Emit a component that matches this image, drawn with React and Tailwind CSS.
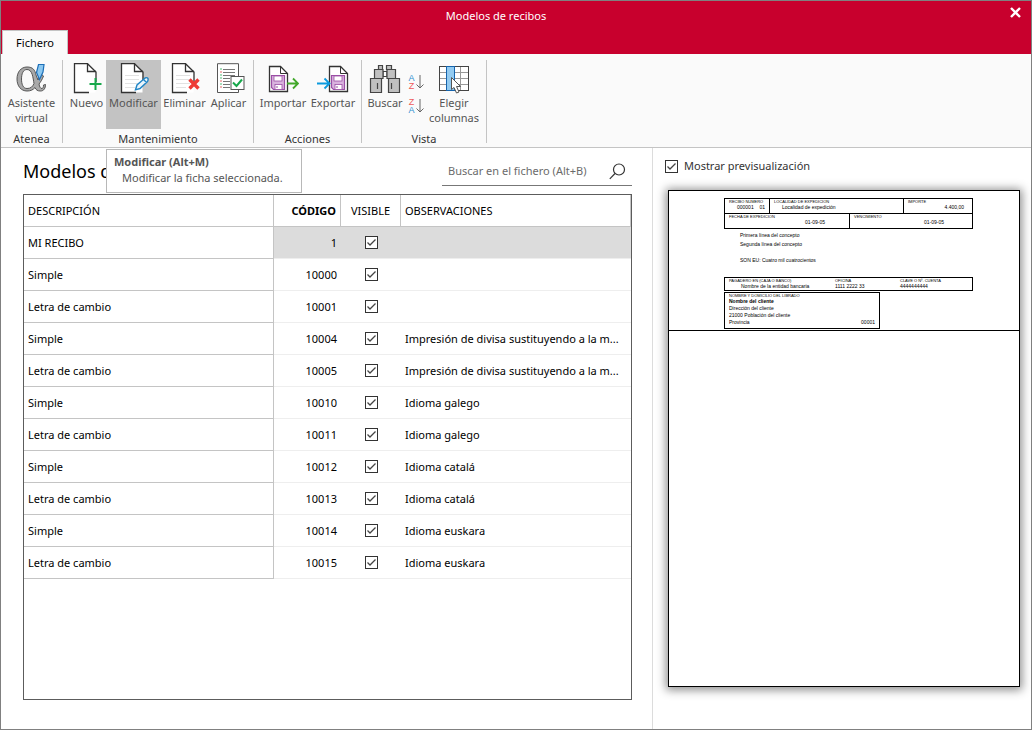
import { useState } from "react";
import clsx from "clsx";

const models = [
  { name: "MI RECIBO", code: 1, notes: "" },
  { name: "Simple", code: 10000, notes: "" },
  { name: "Letra de cambio", code: 10001, notes: "" },
  { name: "Simple", code: 10004, notes: "Impresión de divisa sustituyendo a la m..." },
  { name: "Letra de cambio", code: 10005, notes: "Impresión de divisa sustituyendo a la m..." },
  { name: "Simple", code: 10010, notes: "Idioma galego" },
  { name: "Letra de cambio", code: 10011, notes: "Idioma galego" },
  { name: "Simple", code: 10012, notes: "Idioma catalá" },
  { name: "Letra de cambio", code: 10013, notes: "Idioma catalá" },
  { name: "Simple", code: 10014, notes: "Idioma euskara" },
  { name: "Letra de cambio", code: 10015, notes: "Idioma euskara" },
];

function AssistantIcon() {
  return (
    <svg width="32" height="32" viewBox="0 0 32 32" fill="none">
      <path
        d="M11 4C17 4 19 7 20 12L22 17L25 11L27.500 13C26 17 24.500 19 23 21C23.500 24 24.500 25.500 26 25.500C27 25.500 27.500 24 27.500 22L29.500 21.500C29.500 25 28 28 24.500 28C21.500 28 20 27 19 24.500C17 27 14.500 28 11 28C5 28 1 23 1 16C1 9 5 4 11 4ZM11 6.500C7 6.500 5.500 11 5.500 16C5.500 21 7 25.500 11 25.500C14.500 25.500 16.500 24 18 20.500C17 15 16.500 6.500 11 6.500Z"
        fill="#a9a9a9"
        stroke="#555"
        fillRule="evenodd"
      />
      <path d="M22.500 1.500H28L27 9L23.500 16.500L20.500 9.500Z" fill="#8cc8f0" stroke="#1d6fb8" strokeWidth="1.200" />
    </svg>
  );
}

function Page() {
  return (
    <>
      <path d="M3.500 .7H16.500L24.500 8.500V29.500H3.500Z" fill="#fff" />
      <path d="M25 19V9L16.500 .7H3.500V29.500H18" stroke="#333" strokeWidth="1.300" />
      <path d="M16.500 .7V8.500H25" stroke="#333" strokeWidth="1.300" />
    </>
  );
}

function PageLines() {
  return <path d="M7 12.500H21M7 16.500H21M7 20.500H21M7 24.500H17" stroke="#e2e2e2" />;
}

function NewIcon() {
  return (
    <svg width="32" height="32" viewBox="0 0 32 32" fill="none">
      <Page />
      <path d="M24.500 15V27M18.500 21H30.500" stroke="#17a84b" strokeWidth="2" />
    </svg>
  );
}

function EditIcon() {
  return (
    <svg width="32" height="32" viewBox="0 0 32 32" fill="none">
      <Page />
      <PageLines />
      <path d="M17.500 26.800L19 22L27 15Q29 14 30 15.500Q30.500 17 29.500 18.500L22 25.500L17.500 26.800ZM25.500 16.500L28.500 19.500" fill="#eaf5fc" stroke="#2185c5" strokeWidth="1.400" />
    </svg>
  );
}

function DeleteIcon() {
  return (
    <svg width="32" height="32" viewBox="0 0 32 32" fill="none">
      <Page />
      <PageLines />
      <path d="M20.500 16.500L29.500 25.500M29.500 16.500L20.500 25.500" stroke="#ee3b36" strokeWidth="3.400" />
    </svg>
  );
}

function ApplyIcon() {
  return (
    <svg width="32" height="32" viewBox="0 0 32 32" fill="none">
      <path d="M4.500 .7H25.500V29.500H4.500Z" fill="#fff" stroke="#555" />
      <path d="M10 6.500H22M10 9.500H22M10 12.500H22M10 15.500H17M10 18.500H17M10 21.500H17M10 24.500H17" stroke="#777" />
      <path d="M7.500 6H8.500M7.500 12H8.500M7.500 15H8.500M7.500 21H8.500" stroke="#17a84b" strokeWidth="1.500" />
      <path d="M7.500 9H8.500M7.500 18H8.500M7.500 24H8.500" stroke="#d33" strokeWidth="1.500" />
      <rect x="18" y="13.500" width="13" height="13" fill="#fff" stroke="#555" />
      <path d="M20 19.500L23.500 23L29 16.500" stroke="#17a84b" strokeWidth="2" />
    </svg>
  );
}

function Floppy({ x }) {
  return (
    <g transform={`translate(${x} 12)`}>
      <path d="M.5 .5H13.500V14.500H2.500L.5 12.500Z" fill="#d9b3de" stroke="#9b4fa5" strokeWidth="1.200" />
      <rect x="3" y="1" width="8" height="5" fill="#fff" stroke="#9b4fa5" strokeWidth=".8" />
      <rect x="4" y="9.500" width="7" height="5" fill="#fff" stroke="#9b4fa5" strokeWidth=".8" />
      <path d="M6 11V13" stroke="#9b4fa5" />
    </g>
  );
}

function ImportIcon() {
  return (
    <svg width="32" height="32" viewBox="0 0 32 32" fill="none">
      <path d="M2.500 3.500H13.500L20.500 10.500V28.500H2.500Z" fill="#fff" stroke="#333" strokeWidth="1.300" />
      <path d="M13.500 3.500V10.500H20.500" stroke="#333" />
      <Floppy x={4} />
      <path d="M20 20.500H31M26 15.500L31 20.500L26 25.500" stroke="#42a82b" strokeWidth="1.800" />
    </svg>
  );
}

function ExportIcon() {
  return (
    <svg width="32" height="32" viewBox="0 0 32 32" fill="none">
      <path d="M12.500 3.500H23.500L30.500 10.500V28.500H12.500Z" fill="#fff" stroke="#333" strokeWidth="1.300" />
      <path d="M23.500 3.500V10.500H30.500" stroke="#333" />
      <Floppy x={14} />
      <path d="M0 20.500H12M7.500 15.500L12.500 20.500L7.500 25.500" stroke="#0b9ade" strokeWidth="1.800" />
    </svg>
  );
}

function BinocularsIcon() {
  return (
    <svg width="32" height="32" viewBox="0 -1 32 32" fill="#c0c0c0" stroke="#444" strokeWidth="1.200">
      <path d="M9.500 1.500H13.500V5.500H9.500ZM17.500 1.500H22.500V5.500H17.500Z" />
      <path d="M14 7.500H18V12.500H14Z" fill="#fff" />
      <path d="M5.500 5.500H14V14.500H5.500ZM18 5.500H26.500V14.500H18Z" />
      <path d="M1.500 14.500H12.500V28.500H1.500ZM19.500 14.500H30.500V28.500H19.500ZM8.500 19V25M22.500 19V25" />
    </svg>
  );
}

function ColumnsIcon() {
  return (
    <svg width="32" height="32" viewBox="0 -1 32 32" fill="none">
      <rect x="1.500" y="2.500" width="29" height="24" fill="#fff" stroke="#444" />
      <path d="M2 8.500H30M2 14.500H30M2 20.500H30M22.500 3V26" stroke="#999" />
      <rect x="8.500" y="2.500" width="8" height="24" fill="#93cbf1" stroke="#1664ad" />
      <path d="M13.500 13.500V25.500L16 23.500L18.500 29L21 28L18.500 22.500H22.500Z" fill="#fff" stroke="#555" />
    </svg>
  );
}

function SortIcon({ first, second, firstClass, secondClass }) {
  return (
    <span className="flex items-center gap-px font-['Liberation_Sans'] text-[9px] leading-[8px]">
      <span className="flex w-[7px] flex-col items-center">
        <span className={firstClass}>{first}</span>
        <span className={secondClass}>{second}</span>
      </span>
      <svg width="8" height="14" viewBox="0 0 8 14" fill="none" stroke="#666">
        <path d="M4 0V13M.5 9.500L4 13L7.500 9.500" />
      </svg>
    </span>
  );
}

function RibbonButton({ icon, children, active, className }) {
  return (
    <button
      type="button"
      className={clsx(
        "flex h-[69px] flex-col items-center pt-[3px] leading-[15px] text-[#555]",
        active && "bg-[#c3c3c3]",
        className
      )}
    >
      {icon}
      <span>{children}</span>
    </button>
  );
}

function RibbonGroup({ title, className, children }) {
  return (
    <section className={clsx("flex flex-col justify-between border-r border-[#c4c4c4]", className)}>
      <div className="flex">{children}</div>
      <h2 className="text-center leading-2 text-[#333]">{title}</h2>
    </section>
  );
}

function CheckBox(props) {
  return (
    <span className="inline-grid align-middle">
      <input
        type="checkbox"
        className="peer col-start-1 row-start-1 size-[13px] appearance-none border border-[#333] bg-white"
        {...props}
      />
      <svg
        className="pointer-events-none invisible col-start-1 row-start-1 peer-checked:visible"
        width="13"
        height="13"
        viewBox="0 0 13 13"
        fill="none"
      >
        <path d="M2.500 6.500L5 9L10.500 3.500" stroke="#444" strokeWidth="1.300" />
      </svg>
    </span>
  );
}

function Field({ label, className, children }) {
  return (
    <div className={clsx("px-1 leading-[7px]", className)}>
      <div className="text-[4px] leading-[5px] whitespace-nowrap">{label}</div>
      {children}
    </div>
  );
}

function Receipt() {
  return (
    <div className="border-b border-black px-[55px] pt-[7px] pb-px font-['Liberation_Sans',sans-serif] text-[5px] text-black">
      <div className="w-[249px] border border-black">
        <div className="flex h-[15px] border-b border-black">
          <Field label="RECIBO NUMERO" className="w-[45px] border-r border-black">
            <div className="flex justify-between pl-2">
              <span>000001</span>
              <span>01</span>
            </div>
          </Field>
          <Field label="LOCALIDAD DE EXPEDICION" className="flex-1 border-r border-black">
            <div className="pl-2">Localidad de expedición</div>
          </Field>
          <Field label="IMPORTE" className="w-[68px]">
            <div className="pr-1 text-right">4.400,00</div>
          </Field>
        </div>
        <div className="flex h-[14px]">
          <Field label="FECHA DE EXPEDICION" className="w-[125px] border-r border-black">
            <div className="pr-5 text-right">01-09-05</div>
          </Field>
          <Field label="VENCIMIENTO" className="flex-1">
            <div className="pr-6 text-right">01-09-05</div>
          </Field>
        </div>
      </div>
      <div className="pt-[2px] pl-4 leading-[9px]">
        <p>Primera línea del concepto</p>
        <p>Segunda línea del concepto</p>
        <p className="pt-[7px]">SON EU: Cuatro mil cuatrocientos</p>
      </div>
      <div className="mt-3 flex h-[14px] w-[249px] border border-black">
        <Field label="PAGADERO EN (CAJA O BANCO)" className="w-[106px]">
          <div className="pl-3">Nombre de la entidad bancaria</div>
        </Field>
        <Field label="OFICINA" className="w-[65px]">
          1111 2222 33
        </Field>
        <Field label="CLAVE O Nº. CUENTA">4444444444</Field>
      </div>
      <div className="mt-px h-[37px] w-[156px] border border-black px-1">
        <div className="text-[4px] leading-[5px]">NOMBRE Y DOMICILIO DEL LIBRADO</div>
        <div className="leading-[7px]">
          <p className="font-bold">Nombre del cliente</p>
          <p>Dirección del cliente</p>
          <p>21000 Población del cliente</p>
          <p className="flex justify-between">
            <span>Provincia</span>
            <span>00001</span>
          </p>
        </div>
      </div>
    </div>
  );
}

export default function App() {
  const [selected, setSelected] = useState(1);
  const [preview, setPreview] = useState(true);

  return (
    <div className="flex min-h-screen flex-col border border-[#808080] bg-white font-['Noto_Sans',sans-serif] text-[11px] text-black">
      <header className="relative bg-[#c8002d]">
        <h1 className="py-[7px] pr-12 pl-2 text-center leading-[15px] text-white">Modelos de recibos</h1>
        <button type="button" aria-label="Cerrar" className="absolute top-1.5 right-2.5 text-white">
          <svg width="11" height="11" viewBox="0 0 11 11" stroke="currentColor" strokeWidth="2.400">
            <path d="M1 1L10 10M10 1L1 10" />
          </svg>
        </button>
        <nav className="flex pl-px">
          <button type="button" className="h-6 w-[66px] border border-b-0 border-[#c4c4c4] bg-[#fafafa] pt-px">
            Fichero
          </button>
        </nav>
      </header>

      <div className="flex h-[94px] border-b border-[#c4c4c4] bg-[#fafafa] pt-1.5 pb-1">
        <RibbonGroup title="Atenea" className="w-[62px]">
          <RibbonButton icon={<AssistantIcon />} className="w-full">
            Asistente virtual
          </RibbonButton>
        </RibbonGroup>
        <RibbonGroup title="Mantenimiento" className="w-[191px]">
          <RibbonButton icon={<NewIcon />} className="ml-1 w-[39px]">
            Nuevo
          </RibbonButton>
          <div className="relative">
            <RibbonButton icon={<EditIcon />} active className="w-[55px]">
              Modificar
            </RibbonButton>
            <div
              role="tooltip"
              className="absolute top-[89px] left-0 z-10 h-11 w-[196px] border border-[#b8b8b8] bg-white px-[7px] pt-1 leading-4 text-[#555]"
            >
              <strong>Modificar (Alt+M)</strong>
              <p className="pl-2 whitespace-nowrap">Modificar la ficha seleccionada.</p>
            </div>
          </div>
          <RibbonButton icon={<DeleteIcon />} className="w-[47px]">
            Eliminar
          </RibbonButton>
          <RibbonButton icon={<ApplyIcon />} className="w-[41px]">
            Aplicar
          </RibbonButton>
        </RibbonGroup>
        <RibbonGroup title="Acciones" className="w-[108px]">
          <RibbonButton icon={<ImportIcon />} className="ml-1 w-[50px]">
            Importar
          </RibbonButton>
          <RibbonButton icon={<ExportIcon />} className="w-[50px]">
            Exportar
          </RibbonButton>
        </RibbonGroup>
        <RibbonGroup title="Vista" className="w-[125px]">
          <RibbonButton icon={<BinocularsIcon />} className="w-[46px]">
            Buscar
          </RibbonButton>
          <div className="flex flex-col gap-2 pt-[14px]">
            <button type="button" aria-label="Orden ascendente">
              <SortIcon first="A" second="Z" firstClass="text-[#2f8fd0]" secondClass="text-[#ee5a5a]" />
            </button>
            <button type="button" aria-label="Orden descendente">
              <SortIcon first="Z" second="A" firstClass="text-[#ee5a5a]" secondClass="text-[#2f8fd0]" />
            </button>
          </div>
          <RibbonButton icon={<ColumnsIcon />} className="w-[60px]">
            Elegir columnas
          </RibbonButton>
        </RibbonGroup>
      </div>

      <main className="flex flex-1">
        <section className="flex flex-1 flex-col pr-5 pb-[29px] pl-[22px]">
          <div className="flex h-[46px] items-start justify-between pt-2">
            <h2 className="text-lg leading-[30px]">Modelos de recibos</h2>
            <label className="flex h-[30px] w-[190px] items-center border-b border-[#777] px-1.5 pt-0.5">
              <input
                type="search"
                aria-label="Buscar en el fichero"
                placeholder="Buscar en el fichero (Alt+B)"
                className="min-w-0 flex-1 outline-none placeholder:text-[#6b6b6b]"
              />
              <svg width="17" height="17" viewBox="0 0 17 17" fill="none" stroke="#333" strokeWidth="1.200">
                <circle cx="10" cy="6.500" r="5.500" />
                <path d="M6 10.500L.8 15.800" />
              </svg>
            </label>
          </div>
          <div className="flex-1 border border-[#5c5c5c]">
            <table className="w-full table-fixed border-separate border-spacing-0 text-left">
              <thead>
                <tr className="h-8 *:border-r *:border-b *:border-[#c4c4c4] *:px-1 *:pt-0.5 *:font-normal">
                  <th className="w-[250px]">DESCRIPCIÓN</th>
                  <th className="w-[67px] text-right">
                    <strong>CÓDIGO</strong>
                  </th>
                  <th className="w-[60px] text-center">VISIBLE</th>
                  <th>OBSERVACIONES</th>
                </tr>
              </thead>
              <tbody>
                {models.map((m) => (
                  <tr
                    key={m.code}
                    onClick={() => setSelected(m.code)}
                    className={clsx("h-8 *:border-b *:px-1", m.code === selected && "bg-[#dcdcdc]")}
                  >
                    <td className="border-r border-[#c4c4c4] bg-white pt-0.5">{m.name}</td>
                    <td className="border-[#eee] pt-0.5 text-right">{m.code}</td>
                    <td className="border-[#eee] text-center leading-3">
                      <CheckBox defaultChecked aria-label={`Visible ${m.code}`} />
                    </td>
                    <td className="border-[#eee] pt-0.5 whitespace-nowrap">{m.notes}</td>
                  </tr>
                ))}
              </tbody>
            </table>
          </div>
        </section>

        <aside className="flex w-[379px] flex-col border-l border-[#dcdcdc] pr-[11px] pb-[42px] pl-[15px]">
          <label className="-ml-[3px] flex h-[42px] items-center gap-1.5 pb-1.5 text-[#333]">
            <CheckBox checked={preview} onChange={(e) => setPreview(e.target.checked)} />
            Mostrar previsualización
          </label>
          <div className="flex-1 border border-black bg-white shadow-[0_1px_9px_2px_rgba(0,0,0,0.45)]">
            {preview && <Receipt />}
          </div>
        </aside>
      </main>
    </div>
  );
}
